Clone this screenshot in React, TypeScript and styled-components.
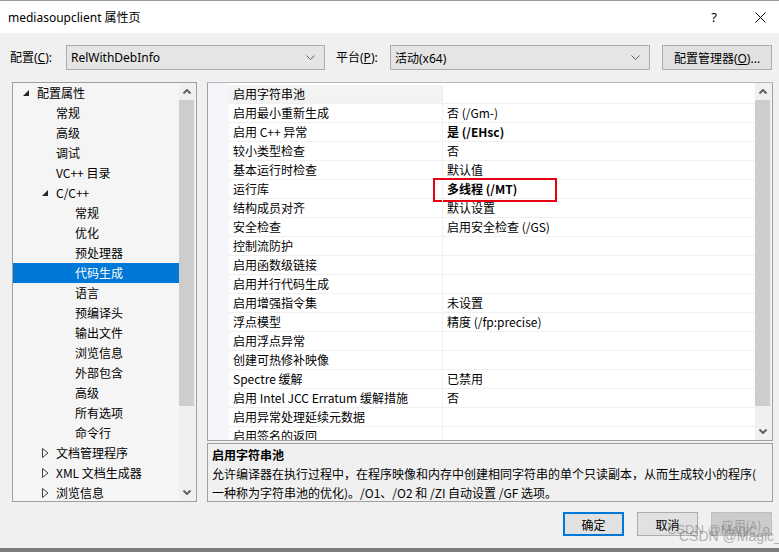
import React from "react";
import styled, { createGlobalStyle, css } from "styled-components";

const GlobalStyle = createGlobalStyle`
  html, body {
    margin: 0;
    padding: 0;
  }
  body {
    font-family: "Noto Sans", "Noto Sans CJK SC", sans-serif;
    font-size: 12px;
    color: #000;
    background: #f0f0f0;
  }
`;

const Window = styled.div`
  position: relative;
  width: 779px;
  height: 552px;
  display: flex;
  flex-direction: column;
  background: #f0f0f0;
  overflow: hidden;
`;

const TitleBar = styled.div`
  height: 32px;
  border-top: 1px solid #9a9a9a;
  background: #fff;
  display: flex;
  align-items: center;
  padding-left: 8px;
  font-size: 12px;
`;

const TitleControls = styled.div`
  margin-left: auto;
  margin-right: 13px;
  display: flex;
  align-items: center;
  gap: 38px;
  font-size: 13px;
`;

const Toolbar = styled.div`
  height: 49px;
  display: flex;
  align-items: center;
  padding-left: 10px;
`;

const Label = styled.span<{ $w: number; $gap?: number }>`
  width: ${(p) => p.$w}px;
  padding-left: ${(p) => p.$gap ?? 0}px;
  flex: none;
  line-height: 25px;
  u {
    text-decoration: underline;
  }
`;

const Combo = styled.div<{ $w: number }>`
  width: ${(p) => p.$w}px;
  height: 25px;
  box-sizing: border-box;
  border: 1px solid #acacac;
  background: #e5e5e5;
  display: flex;
  align-items: center;
  padding: 0 9px 0 4px;
  justify-content: space-between;
`;

const Button = styled.button<{ $variant?: "default" | "disabled" }>`
  height: 24px;
  box-sizing: border-box;
  border: 1px solid #adadad;
  background: #e1e1e1;
  font: inherit;
  font-size: 12px;
  padding: 0;
  color: #000;
  ${(p) =>
    p.$variant === "default" &&
    css`
      border: 2px solid #0078d7;
    `}
  ${(p) =>
    p.$variant === "disabled" &&
    css`
      color: #a0a0a0;
      background: #cccccc;
      border-color: #bfbfbf;
    `}
`;

const ManagerButton = styled(Button)`
  margin-left: 12px;
  width: 110px;
  height: 25px;
`;

const Main = styled.div`
  height: 420px;
  display: flex;
  padding-left: 12px;
  gap: 10px;
`;

const TreePanel = styled.div`
  width: 185px;
  box-sizing: border-box;
  border: 1px solid #a0a0a0;
  background: #f5f5f5;
  display: flex;
  overflow: hidden;
`;

const TreeList = styled.div`
  flex: 1;
  overflow: hidden;
`;

const TreeRow = styled.div<{ $level: number; $selected?: boolean }>`
  height: 20px;
  display: flex;
  align-items: center;
  padding-left: ${(p) => 10 + p.$level * 19}px;
  line-height: 20px;
  white-space: nowrap;
  font-family: "Noto Sans CJK SC", "Noto Sans", sans-serif;
  ${(p) =>
    p.$selected &&
    css`
      background: #0078d7;
      color: #fff;
    `}
`;

const Arrow = styled.span`
  width: 14px;
  flex: none;
  display: flex;
  align-items: center;
`;

const ScrollBar = styled.div<{ $w: number }>`
  width: ${(p) => p.$w}px;
  flex: none;
  display: flex;
  flex-direction: column;
  background: #f0f0f0;
`;

const ScrollBtn = styled.div`
  height: 17px;
  display: flex;
  align-items: center;
  justify-content: center;
  padding-right: 2px;
`;

const Thumb = styled.div<{ $h: number }>`
  height: ${(p) => p.$h}px;
  background: #cdcdcd;
  margin-right: 2px;
`;

const Track = styled.div`
  flex: 1;
`;

const RightColumn = styled.div`
  width: 566px;
  display: flex;
  flex-direction: column;
  gap: 2px;
`;

const Grid = styled.div`
  height: 359px;
  box-sizing: border-box;
  border: 1px solid #a0a0a0;
  border-top-color: #b8b8b8;
  background: #fff;
  display: flex;
  overflow: hidden;
`;

const Gutter = styled.div`
  width: 21px;
  flex: none;
  background: #f4f6fa;
`;

const Rows = styled.div`
  flex: 1;
  overflow: hidden;
  padding-top: 2px;
`;

const Row = styled.div`
  display: grid;
  grid-template-columns: 214px 1fr;
  height: 19px;
`;

const Cell = styled.div<{ $bold?: boolean; $name?: boolean; $active?: boolean }>`
  position: relative;
  box-sizing: border-box;
  height: 19px;
  line-height: 18px;
  padding-left: 4px;
  border-bottom: 1px solid #f0f0f0;
  white-space: nowrap;
  font-family: "Noto Sans CJK SC", "Noto Sans", sans-serif;
  font-weight: ${(p) => (p.$bold ? 700 : 400)};
  ${(p) =>
    p.$name &&
    css`
      border-right: 1px solid #f0f0f0;
    `}
  ${(p) =>
    p.$active &&
    css`
      background: #f3f3f3;
    `}
`;

const RedMark = styled.span`
  position: absolute;
  left: -10px;
  top: -2px;
  width: 124px;
  height: 24px;
  box-sizing: border-box;
  border: 2px solid #e60012;
`;

const Description = styled.div`
  height: 59px;
  box-sizing: border-box;
  border: 1px solid #a0a0a0;
  padding: 1px 0 0 4px;
  font-family: "Noto Sans CJK SC", "Noto Sans", sans-serif;
  line-height: 19px;
  white-space: nowrap;
  overflow: hidden;
`;

const DescTitle = styled.div`
  font-weight: 700;
`;

const Footer = styled.div`
  height: 46px;
  display: flex;
  justify-content: flex-end;
  align-items: flex-start;
  padding: 10px 7px 0 0;
  box-sizing: border-box;
  gap: 13px;
`;

const FooterButton = styled(Button)`
  width: 61px;
  font-family: "Noto Sans CJK SC", "Noto Sans", sans-serif;
`;

const BottomEdge = styled.div`
  height: 4px;
  background: #7b7b7b;
`;

const Watermark = styled.span<{ $x: number; $y: number; $size: number }>`
  position: absolute;
  left: ${(p) => p.$x}px;
  top: ${(p) => p.$y}px;
  font-family: "Liberation Sans", sans-serif;
  font-size: ${(p) => p.$size}px;
  color: rgba(110, 110, 110, 0.5);
  white-space: nowrap;
  pointer-events: none;
`;

const ChevronDown = () => (
  <svg width="9" height="5" viewBox="0 0 9 5">
    <polyline points="0.5,0.5 4.5,4.5 8.5,0.5" fill="none" stroke="#606060" strokeWidth="1" />
  </svg>
);

const ScrollUp = () => (
  <svg width="8" height="5" viewBox="0 0 8 5">
    <polyline points="0.5,4.5 4,1 7.5,4.5" fill="none" stroke="#606060" strokeWidth="2" />
  </svg>
);

const ScrollDown = () => (
  <svg width="8" height="5" viewBox="0 0 8 5">
    <polyline points="0.5,0.5 4,4 7.5,0.5" fill="none" stroke="#606060" strokeWidth="2" />
  </svg>
);

const Expanded = () => (
  <svg width="6" height="6" viewBox="0 0 6 6">
    <polygon points="6,0 6,6 0,6" fill="#262626" />
  </svg>
);

const Collapsed = () => (
  <svg width="7" height="10" viewBox="0 0 7 10">
    <polygon points="0.5,0.5 6,5 0.5,9.5" fill="none" stroke="#404040" strokeWidth="1" />
  </svg>
);

const CloseIcon = () => (
  <svg width="11" height="11" viewBox="0 0 11 11">
    <path d="M0.5 0.5 L10.5 10.5 M10.5 0.5 L0.5 10.5" stroke="#000" strokeWidth="1" />
  </svg>
);

type TreeItem = { label: string; level: number; arrow?: "open" | "closed"; selected?: boolean };

const tree: TreeItem[] = [
  { label: "配置属性", level: 0, arrow: "open" },
  { label: "常规", level: 1 },
  { label: "高级", level: 1 },
  { label: "调试", level: 1 },
  { label: "VC++ 目录", level: 1 },
  { label: "C/C++", level: 1, arrow: "open" },
  { label: "常规", level: 2 },
  { label: "优化", level: 2 },
  { label: "预处理器", level: 2 },
  { label: "代码生成", level: 2, selected: true },
  { label: "语言", level: 2 },
  { label: "预编译头", level: 2 },
  { label: "输出文件", level: 2 },
  { label: "浏览信息", level: 2 },
  { label: "外部包含", level: 2 },
  { label: "高级", level: 2 },
  { label: "所有选项", level: 2 },
  { label: "命令行", level: 2 },
  { label: "文档管理程序", level: 1, arrow: "closed" },
  { label: "XML 文档生成器", level: 1, arrow: "closed" },
  { label: "浏览信息", level: 1, arrow: "closed" },
];

type Prop = { name: string; value?: string; bold?: boolean; marked?: boolean };

const props: Prop[] = [
  { name: "启用字符串池" },
  { name: "启用最小重新生成", value: "否 (/Gm-)" },
  { name: "启用 C++ 异常", value: "是 (/EHsc)", bold: true },
  { name: "较小类型检查", value: "否" },
  { name: "基本运行时检查", value: "默认值" },
  { name: "运行库", value: "多线程 (/MT)", bold: true, marked: true },
  { name: "结构成员对齐", value: "默认设置" },
  { name: "安全检查", value: "启用安全检查 (/GS)" },
  { name: "控制流防护" },
  { name: "启用函数级链接" },
  { name: "启用并行代码生成" },
  { name: "启用增强指令集", value: "未设置" },
  { name: "浮点模型", value: "精度 (/fp:precise)" },
  { name: "启用浮点异常" },
  { name: "创建可热修补映像" },
  { name: "Spectre 缓解", value: "已禁用" },
  { name: "启用 Intel JCC Erratum 缓解措施", value: "否" },
  { name: "启用异常处理延续元数据" },
  { name: "启用签名的返回" },
];

export default function App() {
  return (
    <>
      <GlobalStyle />
      <Window>
        <TitleBar>
          mediasoupclient 属性页
          <TitleControls>
            <span>?</span>
            <CloseIcon />
          </TitleControls>
        </TitleBar>

        <Toolbar>
          <Label $w={56}>
            配置(<u>C</u>):
          </Label>
          <Combo $w={259}>
            <span>RelWithDebInfo</span>
            <ChevronDown />
          </Combo>
          <Label $w={54} $gap={11}>
            平台(<u>P</u>):
          </Label>
          <Combo $w={260}>
            <span>活动(x64)</span>
            <ChevronDown />
          </Combo>
          <ManagerButton>
            配置管理器(<u>O</u>)...
          </ManagerButton>
        </Toolbar>

        <Main>
          <TreePanel>
            <TreeList>
              {tree.map((t, i) => (
                <TreeRow key={i} $level={t.level} $selected={t.selected}>
                  <Arrow>
                    {t.arrow === "open" && <Expanded />}
                    {t.arrow === "closed" && <Collapsed />}
                  </Arrow>
                  {t.label}
                </TreeRow>
              ))}
            </TreeList>
            <ScrollBar $w={17}>
              <ScrollBtn>
                <ScrollUp />
              </ScrollBtn>
              <Thumb $h={306} />
              <Track />
              <ScrollBtn>
                <ScrollDown />
              </ScrollBtn>
            </ScrollBar>
          </TreePanel>

          <RightColumn>
            <Grid>
              <Gutter />
              <Rows>
                {props.map((p, i) => (
                  <Row key={i}>
                    <Cell $name $active={i === 0}>
                      {p.name}
                    </Cell>
                    <Cell $bold={p.bold}>
                      {p.value}
                      {p.marked && <RedMark />}
                    </Cell>
                  </Row>
                ))}
              </Rows>
              <ScrollBar $w={17}>
                <ScrollBtn>
                  <ScrollUp />
                </ScrollBtn>
                <Thumb $h={306} />
                <Track />
                <ScrollBtn>
                  <ScrollDown />
                </ScrollBtn>
              </ScrollBar>
            </Grid>
            <Description>
              <DescTitle>启用字符串池</DescTitle>
              <div>允许编译器在执行过程中，在程序映像和内存中创建相同字符串的单个只读副本，从而生成较小的程序(</div>
              <div>一种称为字符串池的优化)。/O1、/O2 和 /ZI 自动设置 /GF 选项。</div>
            </Description>
          </RightColumn>
        </Main>

        <Footer>
          <FooterButton $variant="default">确定</FooterButton>
          <FooterButton>取消</FooterButton>
          <FooterButton $variant="disabled">应用(A)</FooterButton>
        </Footer>
        <BottomEdge />

        <Watermark $x={667} $y={522} $size={13}>
          CSDN @Magic_o
        </Watermark>
        <Watermark $x={679} $y={528} $size={14}>
          CSDN @Magic_o
        </Watermark>
      </Window>
    </>
  );
}
